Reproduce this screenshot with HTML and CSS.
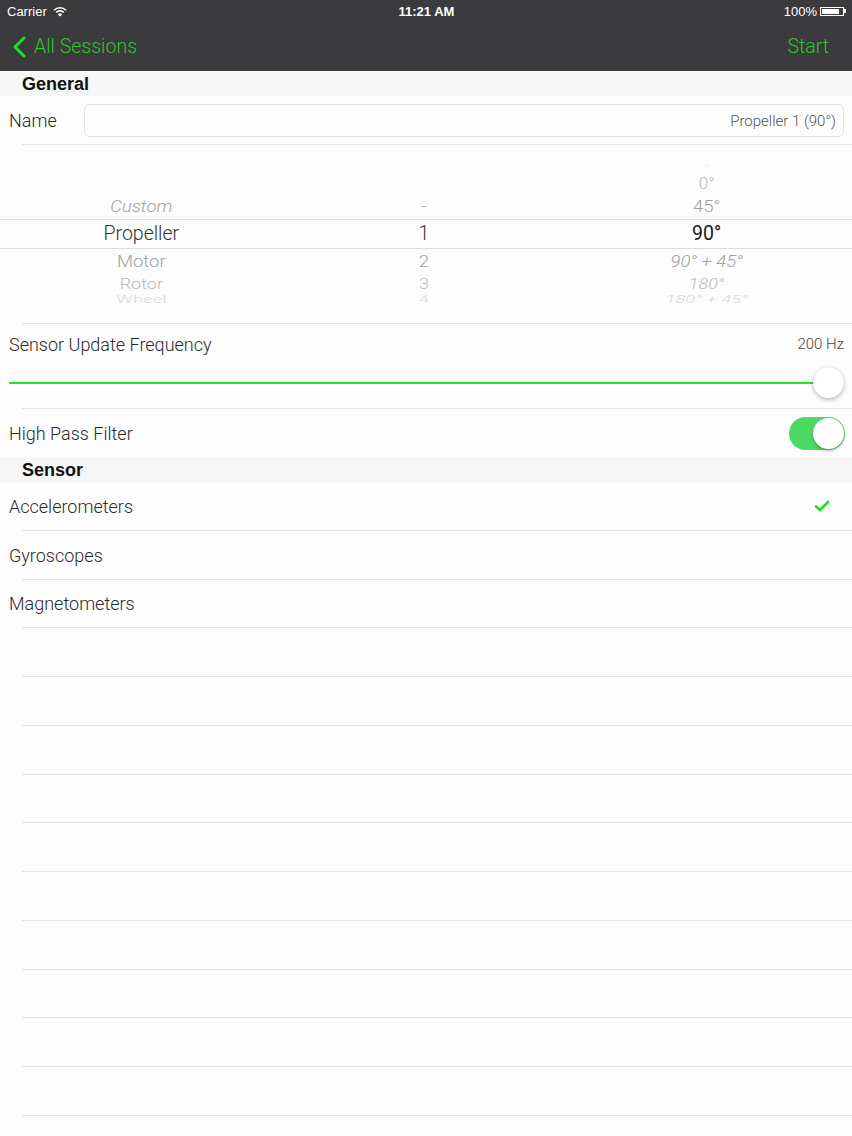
FILE: index.html
```html
<!DOCTYPE html>
<html lang="en">
<head>
    <meta charset="UTF-8">
    <meta name="viewport" content="width=device-width, initial-scale=1.0">
    <title>Session Settings</title>
    <link rel="stylesheet" href="styles.css">
</head>
<body>
    <div class="status-bar">
        <div class="status-left">
            <span>Carrier</span>
            <svg class="wifi" width="14" height="11" viewBox="0 0 14 11">
                <path d="M1 4.2 A8.5 8.5 0 0 1 13 4.2" fill="none" stroke="#fff" stroke-width="1.6"/>
                <path d="M3.2 6.4 A5.4 5.4 0 0 1 10.8 6.4" fill="none" stroke="#fff" stroke-width="1.6"/>
                <path d="M7 10.5 L4.9 8.4 A3 3 0 0 1 9.1 8.4 Z" fill="#fff"/>
            </svg>
        </div>
        <div class="status-time">11:21 AM</div>
        <div class="status-right">
            <span>100%</span>
            <span class="battery"><span class="battery-fill"></span></span>
            <span class="battery-tip"></span>
        </div>
    </div>

    <div class="nav-bar">
        <div class="nav-back">
            <svg width="14" height="22" viewBox="0 0 14 22">
                <path d="M12 2 L3 11 L12 20" fill="none" stroke="#1fe01f" stroke-width="3" stroke-linecap="round" stroke-linejoin="round"/>
            </svg>
            <span>All Sessions</span>
        </div>
        <div class="nav-action">Start</div>
    </div>

    <div class="section-header">General</div>

    <div class="row name-row">
        <span class="row-label">Name</span>
        <div class="text-field">Propeller 1 (90°)</div>
    </div>

    <div class="picker">
        <div class="picker-line top-line"></div>
        <div class="picker-line bottom-line"></div>
        <div class="picker-row far-top">
            <span></span><span></span><span>-</span>
        </div>
        <div class="picker-row near-top">
            <span></span><span></span><span>0°</span>
        </div>
        <div class="picker-row close-top">
            <span class="slant">Custom</span><span>-</span><span>45°</span>
        </div>
        <div class="picker-row selected">
            <span>Propeller</span><span>1</span><span class="current">90°</span>
        </div>
        <div class="picker-row close-bottom">
            <span>Motor</span><span>2</span><span class="slant">90° + 45°</span>
        </div>
        <div class="picker-row near-bottom">
            <span>Rotor</span><span>3</span><span class="slant">180°</span>
        </div>
        <div class="picker-row far-bottom">
            <span>Wheel</span><span>4</span><span class="slant">180° + 45°</span>
        </div>
    </div>

    <div class="row slider-row">
        <div class="slider-top">
            <span class="row-label">Sensor Update Frequency</span>
            <span class="slider-value">200 Hz</span>
        </div>
        <div class="slider">
            <div class="slider-track"></div>
            <div class="slider-thumb"></div>
        </div>
    </div>

    <div class="row switch-row">
        <span class="row-label">High Pass Filter</span>
        <div class="switch on"><div class="switch-knob"></div></div>
    </div>

    <div class="section-header">Sensor</div>

    <div class="list">
        <div class="row list-row">
            <span class="row-label">Accelerometers</span>
            <svg class="check" width="16" height="12" viewBox="0 0 16 12">
                <path d="M2 6.5 L6 10 L14 2" fill="none" stroke="#1fe01f" stroke-width="2.6" stroke-linecap="round" stroke-linejoin="round"/>
            </svg>
        </div>
        <div class="row list-row"><span class="row-label">Gyroscopes</span></div>
        <div class="row list-row"><span class="row-label">Magnetometers</span></div>
        <div class="row list-row"></div>
        <div class="row list-row"></div>
        <div class="row list-row"></div>
        <div class="row list-row"></div>
        <div class="row list-row"></div>
        <div class="row list-row"></div>
        <div class="row list-row"></div>
        <div class="row list-row"></div>
        <div class="row list-row"></div>
        <div class="row list-row"></div>
        <div class="row list-row"></div>
    </div>
</body>
</html>
```

FILE: styles.css
```css
body {
    margin: 0;
    width: 852px;
    height: 1136px;
    overflow: hidden;
    background-color: #fdfdfd;
    font-family: Roboto, "Liberation Sans", sans-serif;
    font-weight: 300;
    color: #2a2a2a;
}

/* status bar */
.status-bar {
    height: 22px;
    background-color: #3b3a3c;
    color: #fff;
    font-family: "Liberation Sans", Arial, sans-serif;
    font-weight: 400;
    font-size: 13px;
    display: grid;
    grid-template-columns: 1fr auto 1fr;
    align-items: center;
    padding: 0 6px 0 7px;
}

.status-left {
    display: flex;
    align-items: center;
    gap: 6px;
}

.status-time {
    font-weight: bold;
}

.status-right {
    display: flex;
    align-items: center;
    justify-content: flex-end;
}

.status-right span:first-child {
    margin-right: 3px;
}

.battery {
    width: 24px;
    height: 9px;
    border: 1px solid #fff;
    padding: 1px;
    box-sizing: border-box;
    display: flex;
}

.battery-fill {
    flex: 1;
    background: #fff;
}

.battery-tip {
    width: 2px;
    height: 4px;
    background: #fff;
}

/* navigation bar */
.nav-bar {
    height: 49px;
    background-color: #3b3a3c;
    display: flex;
    align-items: center;
    justify-content: space-between;
    padding: 0 23px 0 12px;
    color: #2ec52e;
    font-size: 19.5px;
    font-weight: 300;
}

.nav-back {
    display: flex;
    align-items: center;
    gap: 8px;
}

/* sections */
.section-header {
    background-color: #f6f6f7;
    height: 25px;
    line-height: 26px;
    padding-left: 22px;
    font-family: "Liberation Sans", Arial, sans-serif;
    font-weight: bold;
    font-size: 18px;
    color: #111;
}

.row {
    display: flex;
    align-items: center;
    padding: 0 8px 0 9px;
    box-sizing: border-box;
}

.row-label {
    font-size: 18px;
}

.name-row {
    height: 49px;
    gap: 27px;
}

.text-field {
    flex: 1;
    height: 33px;
    border: 1px solid #e0e0e2;
    border-radius: 6px;
    box-sizing: border-box;
    display: flex;
    align-items: center;
    justify-content: flex-end;
    padding-right: 7px;
    font-size: 15px;
    color: #555;
}

/* inset separators */
.name-row,
.picker,
.slider-row,
.list-row {
    background-image: linear-gradient(#e2e2e4, #e2e2e4);
    background-size: calc(100% - 22px) 1px;
    background-position: right bottom;
    background-repeat: no-repeat;
}

/* picker */
.picker {
    position: relative;
    height: 179px;
    padding-top: 13px;
    box-sizing: border-box;
    overflow: hidden;
}

.picker-line {
    position: absolute;
    left: 0;
    right: 0;
    height: 1px;
    background: #dcdcde;
}

.top-line {
    top: 74px;
}

.bottom-line {
    top: 103px;
}

.picker-row {
    display: grid;
    grid-template-columns: 1fr 1fr 1fr;
    padding-right: 4px;
    text-align: center;
    align-items: center;
    overflow: hidden;
}

.picker-row span {
    white-space: nowrap;
    display: inline-block;
    justify-self: center;
}

.far-top {
    height: 14px;
    font-size: 11px;
    color: #d8d8d8;
}

.near-top {
    height: 21px;
    font-size: 17px;
    color: #b5b5b5;
}

.close-top {
    height: 26px;
    font-size: 18.5px;
    color: #a0a0a0;
}

.close-top span {
    transform: scaleY(0.92);
}

.selected {
    height: 29px;
    font-size: 19.5px;
    color: #333;
}

.selected .current {
    font-weight: 400;
    color: #1a1a1a;
}

.close-bottom {
    height: 25px;
    font-size: 18.5px;
    color: #a0a0a0;
}

.close-bottom span {
    transform: scaleY(0.92);
}

.near-bottom {
    height: 21px;
    font-size: 18px;
    color: #b8b8b8;
}

.near-bottom span {
    transform: scaleY(0.78);
}

.far-bottom {
    height: 14px;
    font-size: 18.5px;
    color: #d6d6d6;
    align-items: start;
}

.far-bottom span {
    transform: scaleY(0.55);
    transform-origin: top;
}

.slant {
    font-style: italic;
}

/* slider */
.slider-row {
    height: 85px;
    flex-direction: column;
    align-items: stretch;
    justify-content: flex-start;
    padding-top: 7px;
}

.slider-top {
    display: flex;
    justify-content: space-between;
    align-items: center;
    height: 26px;
}

.slider-value {
    font-size: 15px;
    color: #444;
}

.slider {
    position: relative;
    height: 32px;
    margin-top: 10px;
    display: flex;
    align-items: center;
}

.slider-track {
    flex: 1;
    height: 2px;
    background-color: #22e622;
    margin-right: 16px;
}

.slider-thumb {
    position: absolute;
    right: 0;
    top: 0;
    width: 31px;
    height: 31px;
    border-radius: 50%;
    background: #fff;
    box-shadow: 0 2px 4px rgba(0, 0, 0, 0.25), 0 0 1px rgba(0, 0, 0, 0.2);
}

/* switch */
.switch-row {
    height: 48px;
    justify-content: space-between;
    padding-right: 7px;
}

.switch {
    width: 56px;
    height: 33px;
    border-radius: 17px;
    background-color: #4cd964;
    position: relative;
}

.switch-knob {
    position: absolute;
    right: 1px;
    top: 1px;
    width: 31px;
    height: 31px;
    border-radius: 50%;
    background: #fff;
    box-shadow: 0 2px 3px rgba(0, 0, 0, 0.25);
}

/* list */
.list-row {
    height: 48.75px;
    justify-content: space-between;
    padding-right: 22px;
}

.check {
    margin-top: -1px;
}
```
